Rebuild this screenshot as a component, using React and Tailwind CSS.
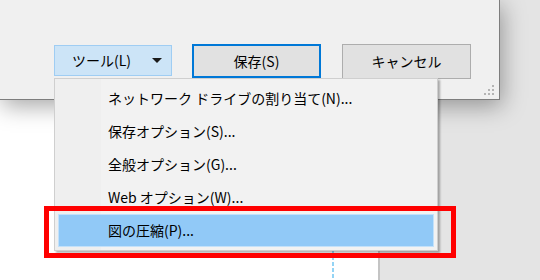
import React from "react";

const menuItems = [
  "ネットワーク ドライブの割り当て(N)...",
  "保存オプション(S)...",
  "全般オプション(G)...",
  "Web オプション(W)...",
  "図の圧縮(P)...",
];

// リサイズグリップの点
const Grip = () => (
  <svg width="12" height="12" viewBox="0 0 12 12" className="absolute right-[4px] bottom-[3px]">
    {[
      [9, 1],
      [5, 5],
      [9, 5],
      [1, 9],
      [5, 9],
      [9, 9],
    ].map(([x, y]) => (
      <rect key={`${x}-${y}`} x={x} y={y} width="2" height="2" fill="#b4b4b4" />
    ))}
  </svg>
);

const App = () => {
  const selected = 4;

  return (
    <div
      className="relative w-[540px] h-[280px] overflow-hidden bg-[#e4e4e4] text-black text-[14px]"
      style={{ fontFamily: '"Noto Sans CJK JP", "Noto Sans", sans-serif' }}
    >
      <div className="flex flex-col h-full">
        {/* ダイアログ */}
        <div className="relative z-10 w-[500px] h-[100px] shrink-0 bg-[#f0f0f0] border-r border-b border-[#7d7d7d] shadow-[2px_6px_22px_rgba(0,0,0,0.35)]">
          <div className="flex items-start pt-[44px] pl-[54px]">
            <div className="flex items-center w-[118px] h-[31px] mt-[1px] bg-[#cce4f7] border border-[#9fcdf3] pl-[17px] pr-[5px]">
              <span>ツール(L)</span>
              <span className="ml-auto mr-[4px] w-0 h-0 border-l-[5px] border-r-[5px] border-t-[5px] border-l-transparent border-r-transparent border-t-[#1a1a1a]" />
            </div>
            <div className="flex items-center justify-center w-[129px] h-[34px] ml-[20px] bg-[#e1e1e1] border-2 border-[#0078d7]">
              保存(S)
            </div>
            <div className="flex items-center justify-center w-[129px] h-[35px] ml-[21px] bg-[#e1e1e1] border border-[#adadad]">
              キャンセル
            </div>
          </div>
          <Grip />
        </div>

        {/* 下のページ */}
        <div className="flex flex-1">
          <div className="relative w-[380px] bg-white border-r-2 border-[#c4c4c4]">
            <div className="ml-[332px] w-[2px] h-full bg-[repeating-linear-gradient(to_bottom,#94d4f5_0_4px,transparent_4px_6px)]" />
          </div>
          <div className="flex-1" />
        </div>
      </div>

      {/* ドロップダウンメニュー */}
      <div className="absolute z-20 left-[54px] top-[78px] w-[384px] border border-[#cfcfcf] bg-[linear-gradient(to_right,#efefef_46px,#f2f2f2_46px)] shadow-[2px_2px_2px_rgba(0,0,0,0.3)] px-[3px] pt-[3px] pb-[3px]">
        {menuItems.map((item, index) => (
          <div
            key={item}
            className={`flex items-center h-[33px] pl-[49px] border ${
              index === selected ? "bg-[#91c9f7] border-[#c3e1fa]" : "border-transparent"
            }`}
          >
            {item}
          </div>
        ))}
      </div>

      {/* 赤い枠 */}
      <div className="absolute z-30 left-[44px] top-[206px] w-[412px] h-[52px] border-[5px] border-[#ff0000]" />
    </div>
  );
};

export default App;
